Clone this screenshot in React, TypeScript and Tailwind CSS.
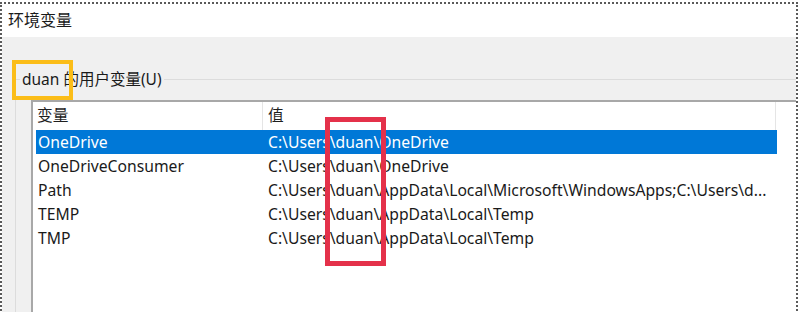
const ROWS = [
  { name: 'OneDrive', value: 'C:\\Users\\duan\\OneDrive' },
  { name: 'OneDriveConsumer', value: 'C:\\Users\\duan\\OneDrive' },
  { name: 'Path', value: 'C:\\Users\\duan\\AppData\\Local\\Microsoft\\WindowsApps;C:\\Users\\d...' },
  { name: 'TEMP', value: 'C:\\Users\\duan\\AppData\\Local\\Temp' },
  { name: 'TMP', value: 'C:\\Users\\duan\\AppData\\Local\\Temp' },
]

const FONT = "font-['Noto_Sans','Noto_Sans_CJK_SC',sans-serif]"

export default function App() {
  return (
    <div className={`w-[800px] h-[312px] overflow-hidden bg-white relative ${FONT}`}>
      <div className="mt-[2px] w-[798px] h-[320px] border-2 border-dotted border-[#5a5a5a] flex flex-col">
        {/* title strip */}
        <div className="h-[33px] bg-white flex items-center pl-[6px] pb-[2px] text-[16px] text-[#1a1a1a]">环境变量</div>

        {/* dialog body */}
        <div className="flex-1 bg-[#f0f0f0] pl-[13px] pt-[32px]">
          <fieldset className="border-t border-l border-[#dcdcdc] pl-[4px] pt-[11px] h-full">
            <legend className="px-[2px] text-[15.5px] leading-[20px] text-[#1a1a1a]">duan 的用户变量(U)</legend>
            <div className="ml-[11px] bg-white border-t-2 border-l-2 border-[#a8a8a8] h-full text-[15.7px]">
              {/* header */}
              <div className="flex h-[28px] items-center text-[#1e1e1e]">
                <div className="w-[230px] pl-[4px] h-full flex items-center border-r border-[#e5e5e5]">变量</div>
                <div className="w-[513px] pl-[5px] h-full flex items-center border-r border-[#e5e5e5]">值</div>
              </div>
              {/* rows */}
              <div className="pl-[3px]">
                {ROWS.map((r, i) => (
                  <div
                    key={r.name}
                    className={`flex h-[24px] items-center w-[741px] whitespace-nowrap ${
                      i === 0 ? 'bg-[#0078d7] text-white' : 'text-[#1a1a1a]'
                    }`}
                  >
                    <div className="w-[227px] pl-[2px] pt-[2px]">{r.name}</div>
                    <div className="pl-[5px] pt-[2px]">{r.value}</div>
                  </div>
                ))}
              </div>
            </div>
          </fieldset>
        </div>
      </div>

      {/* annotation boxes */}
      <div className="absolute left-[12px] top-[60px] w-[61px] h-[40px] border-4 border-[#fbbd18]" />
      <div className="absolute left-[325px] top-[117px] w-[61px] h-[149px] border-[5px] border-[#e4314a]" />
    </div>
  )
}
